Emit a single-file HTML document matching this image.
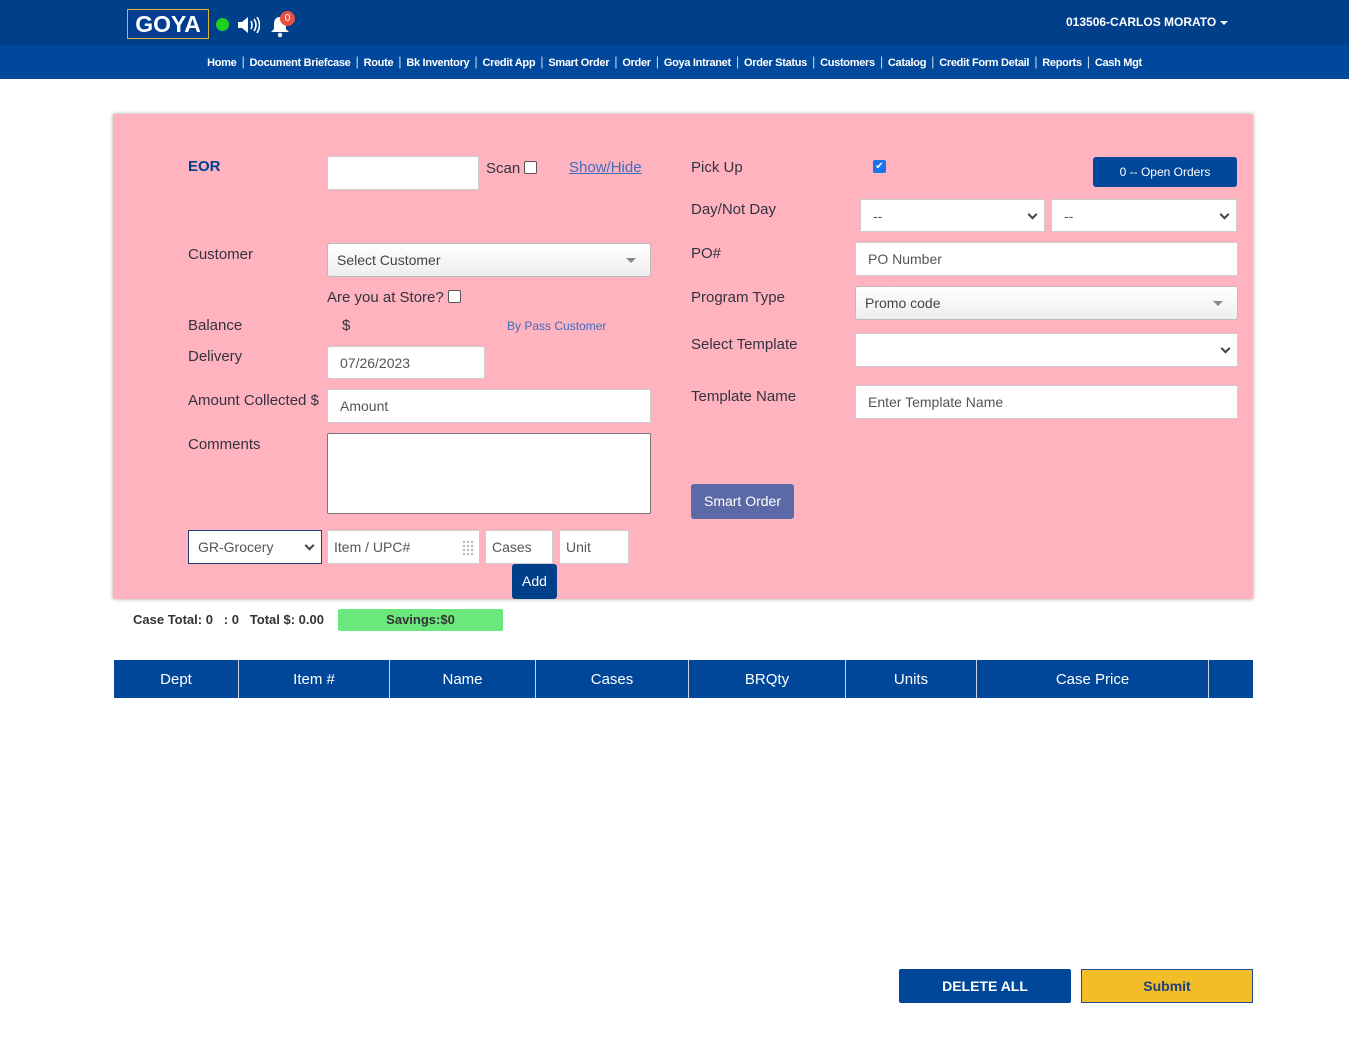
<!DOCTYPE html>
<html><head><meta charset="utf-8">
<style>
*{box-sizing:border-box;margin:0;padding:0}
body{width:1349px;height:1063px;background:#fff;font-family:"Liberation Sans",Arial,sans-serif;position:relative;overflow:hidden;color:#333}
.a{position:absolute}
.top{left:0;top:0;width:1349px;height:45px;background:#003f8a}
.nav{left:0;top:45px;width:1349px;height:34px;background:#00489c;color:#fff;font-size:11px;font-weight:bold;letter-spacing:-0.3px;text-align:center;line-height:34px}
.nav span{padding:0 5px}
.nav i{font-style:normal;color:#c8d6ec;font-weight:normal;font-size:13px}
.panel{left:113px;top:114px;width:1140px;height:485px;background:#ffb3be;box-shadow:0 0 4px rgba(0,0,0,.35)}
.lb{font-size:15px;color:#333340}
.in{background:#fff;border:1px solid #ccc;font-size:14px;color:#555;padding-left:12px;display:flex;align-items:center}
.sel{background:linear-gradient(#fff,#eee);border:1px solid #bbb;border-radius:3px;font-size:14px;color:#444;padding-left:9px;display:flex;align-items:center}
.chev{position:absolute;right:8px;top:50%;width:7px;height:7px;border-right:2px solid #444;border-bottom:2px solid #444;transform:translateY(-70%) rotate(45deg)}
.tri{position:absolute;right:14px;top:50%;margin-top:-2px;border-left:5px solid transparent;border-right:5px solid transparent;border-top:5px solid #888}
.cb{width:13px;height:13px;border:1px solid #555;border-radius:2px;background:#fff;display:inline-block}
.th{top:660px;height:38px;background:#00479a;color:#fff;font-size:15px;display:flex;align-items:center;justify-content:center;border-right:1px solid #c8d4e8}
</style></head><body>
<div class="a top"></div>
<div class="a" style="left:127px;top:9px;width:82px;height:30px;background:#003c8f;border:1px solid #d9b23a;color:#fff;font-weight:900;font-size:23px;line-height:28px;text-align:center;letter-spacing:0px">GOYA</div>
<div class="a" style="left:216px;top:18px;width:13px;height:13px;border-radius:50%;background:#1fd11f"></div>
<svg class="a" style="left:236px;top:14px" width="24" height="22" viewBox="0 0 24 22"><path d="M2 8h4l6-5v16l-6-5H2z" fill="#fff"/><path d="M15 7q2 4 0 8M18 5q4 6 0 12M21 3q5 8 0 16" stroke="#fff" stroke-width="1.6" fill="none"/></svg>
<svg class="a" style="left:268px;top:14px" width="24" height="24" viewBox="0 0 24 24"><path d="M12 3c-4 0-6 3-6 7v5l-3 3h18l-3-3v-5c0-4-2-7-6-7z" fill="#fff"/><circle cx="12" cy="21" r="2.2" fill="#fff"/></svg>
<div class="a" style="left:280px;top:11px;width:15px;height:15px;border-radius:50%;background:#e8503f;color:#fff;font-size:10px;text-align:center;line-height:15px">0</div>
<div class="a" style="left:1066px;top:15px;color:#fff;font-size:12px;font-weight:bold">013506-CARLOS MORATO <span style="display:inline-block;border-left:4px solid transparent;border-right:4px solid transparent;border-top:4px solid #fff;vertical-align:middle"></span></div>
<div class="a nav"><span>Home</span><i>|</i><span>Document Briefcase</span><i>|</i><span>Route</span><i>|</i><span>Bk Inventory</span><i>|</i><span>Credit App</span><i>|</i><span>Smart Order</span><i>|</i><span>Order</span><i>|</i><span>Goya Intranet</span><i>|</i><span>Order Status</span><i>|</i><span>Customers</span><i>|</i><span>Catalog</span><i>|</i><span>Credit Form Detail</span><i>|</i><span>Reports</span><i>|</i><span>Cash Mgt</span></div>

<div class="a panel"></div>
<div class="a" style="left:188px;top:158px;font-weight:bold;font-size:15px;color:#003f8a">EOR</div>
<div class="a in" style="left:327px;top:156px;width:152px;height:34px"></div>
<div class="a lb" style="left:486px;top:160px">Scan <span class="cb" style="vertical-align:-1px"></span></div>
<div class="a" style="left:569px;top:159px;font-size:15px;color:#3f6dc0;text-decoration:underline">Show/Hide</div>
<div class="a lb" style="left:188px;top:246px">Customer</div>
<div class="a sel" style="left:327px;top:243px;width:324px;height:34px">Select Customer<span class="tri"></span></div>
<div class="a lb" style="left:327px;top:289px">Are you at Store? <span class="cb" style="vertical-align:-1px"></span></div>
<div class="a lb" style="left:188px;top:317px">Balance</div>
<div class="a lb" style="left:342px;top:317px">$</div>
<div class="a" style="left:507px;top:319px;font-size:12px;color:#3f6dc0">By Pass Customer</div>
<div class="a lb" style="left:188px;top:348px">Delivery</div>
<div class="a in" style="left:327px;top:346px;width:158px;height:33px;border-radius:3px">07/26/2023</div>
<div class="a lb" style="left:188px;top:392px">Amount Collected $</div>
<div class="a in" style="left:327px;top:389px;width:324px;height:34px">Amount</div>
<div class="a lb" style="left:188px;top:436px">Comments</div>
<div class="a" style="left:327px;top:433px;width:324px;height:81px;background:#fff;border:1px solid #777;border-radius:2px"></div>
<div class="a sel" style="left:188px;top:530px;width:134px;height:34px;border:1px solid #1d3f80;border-radius:0;background:#fff;color:#555">GR-Grocery<span class="chev"></span></div>
<div class="a in" style="left:327px;top:530px;width:153px;height:34px;padding-left:6px">Item / UPC#<span style="position:absolute;right:5px;top:9px;width:12px;height:16px;background:radial-gradient(circle,#bbb 1px,transparent 1.5px) 0 0/4px 4px"></span></div>
<div class="a in" style="left:485px;top:530px;width:68px;height:34px;padding-left:6px">Cases</div>
<div class="a in" style="left:559px;top:530px;width:70px;height:34px;padding-left:6px">Unit</div>
<div class="a" style="left:512px;top:564px;width:45px;height:35px;background:#003f8a;color:#fff;border-radius:3px;font-size:14px;text-align:center;line-height:35px">Add</div>

<div class="a lb" style="left:691px;top:159px">Pick Up</div>
<div class="a" style="left:873px;top:160px;width:13px;height:13px;background:#1a73e8;border-radius:2px;color:#fff;font-size:10px;line-height:13px;text-align:center">✔</div>
<div class="a" style="left:1093px;top:157px;width:144px;height:30px;background:#00479a;border-radius:3px;color:#fff;font-size:12px;text-align:center;line-height:30px">0 -- Open Orders</div>
<div class="a lb" style="left:691px;top:201px">Day/Not Day</div>
<div class="a in" style="left:860px;top:199px;width:185px;height:33px">--<span class="chev"></span></div>
<div class="a in" style="left:1051px;top:199px;width:186px;height:33px">--<span class="chev"></span></div>
<div class="a lb" style="left:691px;top:245px">PO#</div>
<div class="a in" style="left:855px;top:242px;width:383px;height:34px">PO Number</div>
<div class="a lb" style="left:691px;top:289px">Program Type</div>
<div class="a sel" style="left:855px;top:286px;width:383px;height:34px">Promo code<span class="tri"></span></div>
<div class="a lb" style="left:691px;top:336px">Select Template</div>
<div class="a in" style="left:855px;top:333px;width:383px;height:34px"><span class="chev"></span></div>
<div class="a lb" style="left:691px;top:388px">Template Name</div>
<div class="a in" style="left:855px;top:385px;width:383px;height:34px">Enter Template Name</div>
<div class="a" style="left:691px;top:484px;width:103px;height:35px;background:#5b6aa6;border-radius:3px;color:#fff;font-size:14px;text-align:center;line-height:35px">Smart Order</div>

<div class="a" style="left:133px;top:612px;font-size:13px;font-weight:bold;color:#333">Case Total: 0 &nbsp;&nbsp;: 0 &nbsp;&nbsp;Total $: 0.00</div>
<div class="a" style="left:338px;top:609px;width:165px;height:22px;background:#6be87b;font-size:13px;font-weight:bold;color:#333;text-align:center;line-height:22px;border-radius:2px">Savings:$0</div>

<div class="a th" style="left:114px;width:125px">Dept</div>
<div class="a th" style="left:239px;width:151px">Item #</div>
<div class="a th" style="left:390px;width:146px">Name</div>
<div class="a th" style="left:536px;width:153px">Cases</div>
<div class="a th" style="left:689px;width:157px">BRQty</div>
<div class="a th" style="left:846px;width:131px">Units</div>
<div class="a th" style="left:977px;width:232px">Case Price</div>
<div class="a th" style="left:1209px;width:44px;border-right:none"></div>

<div class="a" style="left:899px;top:969px;width:172px;height:34px;background:#00479a;border-radius:2px;color:#fff;font-size:14px;font-weight:bold;text-align:center;line-height:34px">DELETE ALL</div>
<div class="a" style="left:1081px;top:969px;width:172px;height:34px;background:#f2bd27;border:1px solid #1d4a9c;color:#1d3f80;font-size:14px;font-weight:bold;text-align:center;line-height:32px">Submit</div>
</body></html>
